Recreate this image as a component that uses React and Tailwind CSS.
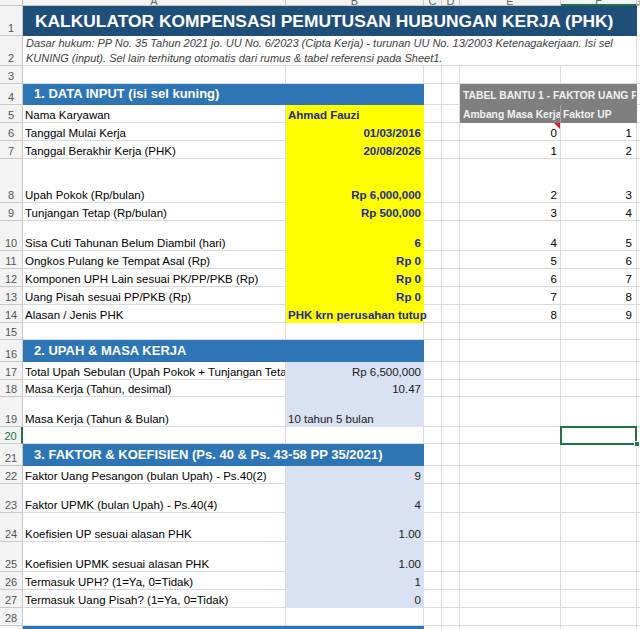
import React from "react";
import clsx from "clsx";

const GRID = "grid grid-cols-[23px_263px_138px_18px_18px_101px_76px_1fr]";

const KINDS = {
  plain: "border-[#dadada] text-black",
  yellow: "bg-[#ffff00] border-[#ffff00] text-[#22288c] font-bold",
  blue: "bg-[#d9e1f2] border-[#d9e1f2] text-[#1a1a1a]",
  grey: "bg-[#7f7f7f] border-[#7f7f7f] text-[#f2f2f2] font-bold",
  greyDiv: "bg-[#7f7f7f] border-b-[#7f7f7f] border-r-[#a6a6a6] text-[#f2f2f2] font-bold",
  section: "bg-[#2e75b6] border-[#2e75b6] text-white font-bold",
  title: "bg-[#1f4e79] border-[#1f4e79] text-white font-bold",
};

function Cell({ children, kind = "plain", right = false, span = "", size = "text-[11.5px] leading-[14px]", pad = "px-[2px]", clip = true, extra = "" }) {
  return (
    <div
      className={clsx(
        "flex min-w-0 items-end whitespace-nowrap border-r border-b",
        clip ? "overflow-hidden" : "overflow-visible",
        KINDS[kind],
        right ? "justify-end" : "justify-start",
        span,
        size,
        pad,
        extra
      )}
    >
      {children}
    </div>
  );
}

function Head({ n, active = false }) {
  return (
    <div
      className={clsx(
        "flex items-end justify-center border-b bg-[#f3f3f3] text-[11px] leading-[14px]",
        active ? "border-r-2 border-r-[#217346] border-b-[#c8c8c8] text-[#217346]" : "border-r border-[#c8c8c8] text-[#555555]"
      )}
    >
      {n}
    </div>
  );
}

function Row({ h, n, active, children }) {
  return (
    <div className={clsx(GRID, h)}>
      <Head n={n} active={active} />
      {children}
    </div>
  );
}

function Blank() {
  return <Cell />;
}

function DataRow({ h, n, label, value, vkind = "yellow", vright = true, e, f, vclip = true }) {
  return (
    <Row h={h} n={n}>
      <Cell>{label}</Cell>
      <Cell kind={vkind} right={vright} clip={vclip} extra={vclip ? "" : "relative z-10"}>
        {value}
      </Cell>
      <Blank />
      <Blank />
      <Cell right pad="pl-[2px] pr-[3px]">{e}</Cell>
      <Cell right pad="pl-[2px] pr-[4px]">{f}</Cell>
      <Blank />
    </Row>
  );
}

function SectionRow({ h, n, text }) {
  return (
    <Row h={h} n={n}>
      <Cell kind="section" span="col-span-2" size="text-[13px] leading-[16px]" pad="pl-[11px] pb-[2px]">
        {text}
      </Cell>
      <Blank />
      <Blank />
      <Blank />
      <Blank />
      <Blank />
    </Row>
  );
}

function ColHeader() {
  const cols = [
    { l: "A", w: "" },
    { l: "B", w: "" },
    { l: "C", w: "" },
    { l: "D", w: "" },
    { l: "E", w: "" },
    { l: "F", w: "active" },
    { l: "G", w: "" },
  ];
  return (
    <div className={clsx(GRID, "h-[6px]")}>
      <div className="border-r border-b border-[#c8c8c8] bg-[#f3f3f3]" />
      {cols.map((c) => (
        <div
          key={c.l}
          className={clsx(
            "flex items-end justify-center overflow-hidden bg-[#f3f3f3] border-r border-r-[#c8c8c8] text-[11px] leading-[7px] text-[#666666]",
            c.w === "active" ? "border-b-2 border-b-[#217346] bg-[#e6e6e6]" : "border-b border-b-[#c8c8c8]"
          )}
        >
          <span>{c.l}</span>
        </div>
      ))}
    </div>
  );
}

export default function App() {
  return (
    <div className="h-[629px] w-[640px] overflow-hidden bg-white font-['Liberation_Sans',Arial,sans-serif]">
      <ColHeader />

      <Row h="h-[30px]" n="1">
        <Cell kind="title" span="col-span-6" size="text-[17.4px] leading-[20px]" pad="pl-[12px] pb-[4px]">
          KALKULATOR KOMPENSASI PEMUTUSAN HUBUNGAN KERJA (PHK)
        </Cell>
        <Blank />
      </Row>

      <Row h="h-[30px]" n="2">
        <div className="col-span-6 flex flex-col justify-end overflow-hidden whitespace-nowrap border-r border-b border-[#dadada] pl-[3px] text-[11px] italic leading-[14.5px] text-[#404040]">
          <span>Dasar hukum: PP No. 35 Tahun 2021 jo. UU No. 6/2023 (Cipta Kerja) - turunan UU No. 13/2003 Ketenagakerjaan. Isi sel</span>
          <span>KUNING (input). Sel lain terhitung otomatis dari rumus &amp; tabel referensi pada Sheet1.</span>
        </div>
        <Blank />
      </Row>

      <Row h="h-[18px]" n="3">
        <Blank />
        <Blank />
        <Blank />
        <Blank />
        <Blank />
        <Blank />
        <Blank />
      </Row>

      <Row h="h-[21px]" n="4">
        <Cell kind="section" span="col-span-2" size="text-[13px] leading-[16px]" pad="pl-[11px] pb-[2px]">
          1. DATA INPUT (isi sel kuning)
        </Cell>
        <Blank />
        <Blank />
        <Cell kind="grey" span="col-span-2" size="text-[10.3px] leading-[13px]" pad="pl-[3px] pb-[2px]">
          TABEL BANTU 1 - FAKTOR UANG PESANGON
        </Cell>
        <Blank />
      </Row>

      <Row h="h-[18px]" n="5">
        <Cell>Nama Karyawan</Cell>
        <Cell kind="yellow">Ahmad Fauzi</Cell>
        <Blank />
        <Blank />
        <Cell kind="greyDiv" size="text-[10.3px] leading-[13px]" pad="pl-[3px] pb-[1px]">
          Ambang Masa Kerja (th)
        </Cell>
        <Cell kind="grey" size="text-[10.3px] leading-[13px]" pad="pl-[2px] pb-[1px]">
          Faktor UP
        </Cell>
        <Blank />
      </Row>

      <Row h="h-[18px]" n="6">
        <Cell>Tanggal Mulai Kerja</Cell>
        <Cell kind="yellow" right>
          01/03/2016
        </Cell>
        <Blank />
        <Blank />
        <Cell right pad="pl-[2px] pr-[3px]" extra="relative">
          0
          <span className="absolute right-0 top-0 h-0 w-0 border-l-[6px] border-t-[6px] border-l-transparent border-t-[#e81123]" />
        </Cell>
        <Cell right pad="pl-[2px] pr-[4px]">1</Cell>
        <Blank />
      </Row>

      <DataRow h="h-[18px]" n="7" label="Tanggal Berakhir Kerja (PHK)" value="20/08/2026" e="1" f="2" />
      <DataRow h="h-[44px]" n="8" label="Upah Pokok (Rp/bulan)" value="Rp 6,000,000" e="2" f="3" />
      <DataRow h="h-[18px]" n="9" label="Tunjangan Tetap (Rp/bulan)" value="Rp 500,000" e="3" f="4" />
      <DataRow h="h-[30px]" n="10" label="Sisa Cuti Tahunan Belum Diambil (hari)" value="6" e="4" f="5" />
      <DataRow h="h-[18px]" n="11" label="Ongkos Pulang ke Tempat Asal (Rp)" value="Rp 0" e="5" f="6" />
      <DataRow h="h-[18px]" n="12" label="Komponen UPH Lain sesuai PK/PP/PKB (Rp)" value="Rp 0" e="6" f="7" />
      <DataRow h="h-[18px]" n="13" label="Uang Pisah sesuai PP/PKB (Rp)" value="Rp 0" e="7" f="8" />
      <DataRow h="h-[18px]" n="14" label="Alasan / Jenis PHK" value="PHK krn perusahan tutup" vright={false} vclip={false} e="8" f="9" />

      <Row h="h-[17px]" n="15">
        <Blank />
        <Blank />
        <Blank />
        <Blank />
        <Blank />
        <Blank />
        <Blank />
      </Row>

      <SectionRow h="h-[22px]" n="16" text="2. UPAH & MASA KERJA" />

      <DataRow h="h-[18px]" n="17" label="Total Upah Sebulan (Upah Pokok + Tunjangan Tetap)" value="Rp 6,500,000" vkind="blue" />
      <DataRow h="h-[17px]" n="18" label="Masa Kerja (Tahun, desimal)" value="10.47" vkind="blue" />
      <DataRow h="h-[30px]" n="19" label="Masa Kerja (Tahun & Bulan)" value="10 tahun 5 bulan" vkind="blue" vright={false} />

      <Row h="h-[17px]" n="20" active>
        <Blank />
        <Blank />
        <Blank />
        <Blank />
        <Blank />
        <div className="relative border-r border-b border-[#dadada]">
          <div className="absolute -left-[1px] -top-[1px] -right-[1px] -bottom-[2px] border-2 border-[#217346]" />
          <div className="absolute -bottom-[4px] -right-[4px] h-[6px] w-[6px] border border-white bg-[#217346]" />
        </div>
        <Blank />
      </Row>

      <SectionRow h="h-[22px]" n="21" text="3. FAKTOR & KOEFISIEN (Ps. 40 & Ps. 43-58 PP 35/2021)" />

      <DataRow h="h-[18px]" n="22" label="Faktor Uang Pesangon (bulan Upah) - Ps.40(2)" value="9" vkind="blue" />
      <DataRow h="h-[29px]" n="23" label="Faktor UPMK (bulan Upah) - Ps.40(4)" value="4" vkind="blue" />
      <DataRow h="h-[29px]" n="24" label="Koefisien UP sesuai alasan PHK" value="1.00" vkind="blue" />
      <DataRow h="h-[30px]" n="25" label="Koefisien UPMK sesuai alasan PHK" value="1.00" vkind="blue" />
      <DataRow h="h-[18px]" n="26" label="Termasuk UPH? (1=Ya, 0=Tidak)" value="1" vkind="blue" />
      <DataRow h="h-[18px]" n="27" label="Termasuk Uang Pisah? (1=Ya, 0=Tidak)" value="0" vkind="blue" />

      <Row h="h-[18px]" n="28">
        <Blank />
        <Blank />
        <Blank />
        <Blank />
        <Blank />
        <Blank />
        <Blank />
      </Row>

      <SectionRow h="h-[22px]" n="29" text="4. PERHITUNGAN KOMPENSASI" />
    </div>
  );
}
